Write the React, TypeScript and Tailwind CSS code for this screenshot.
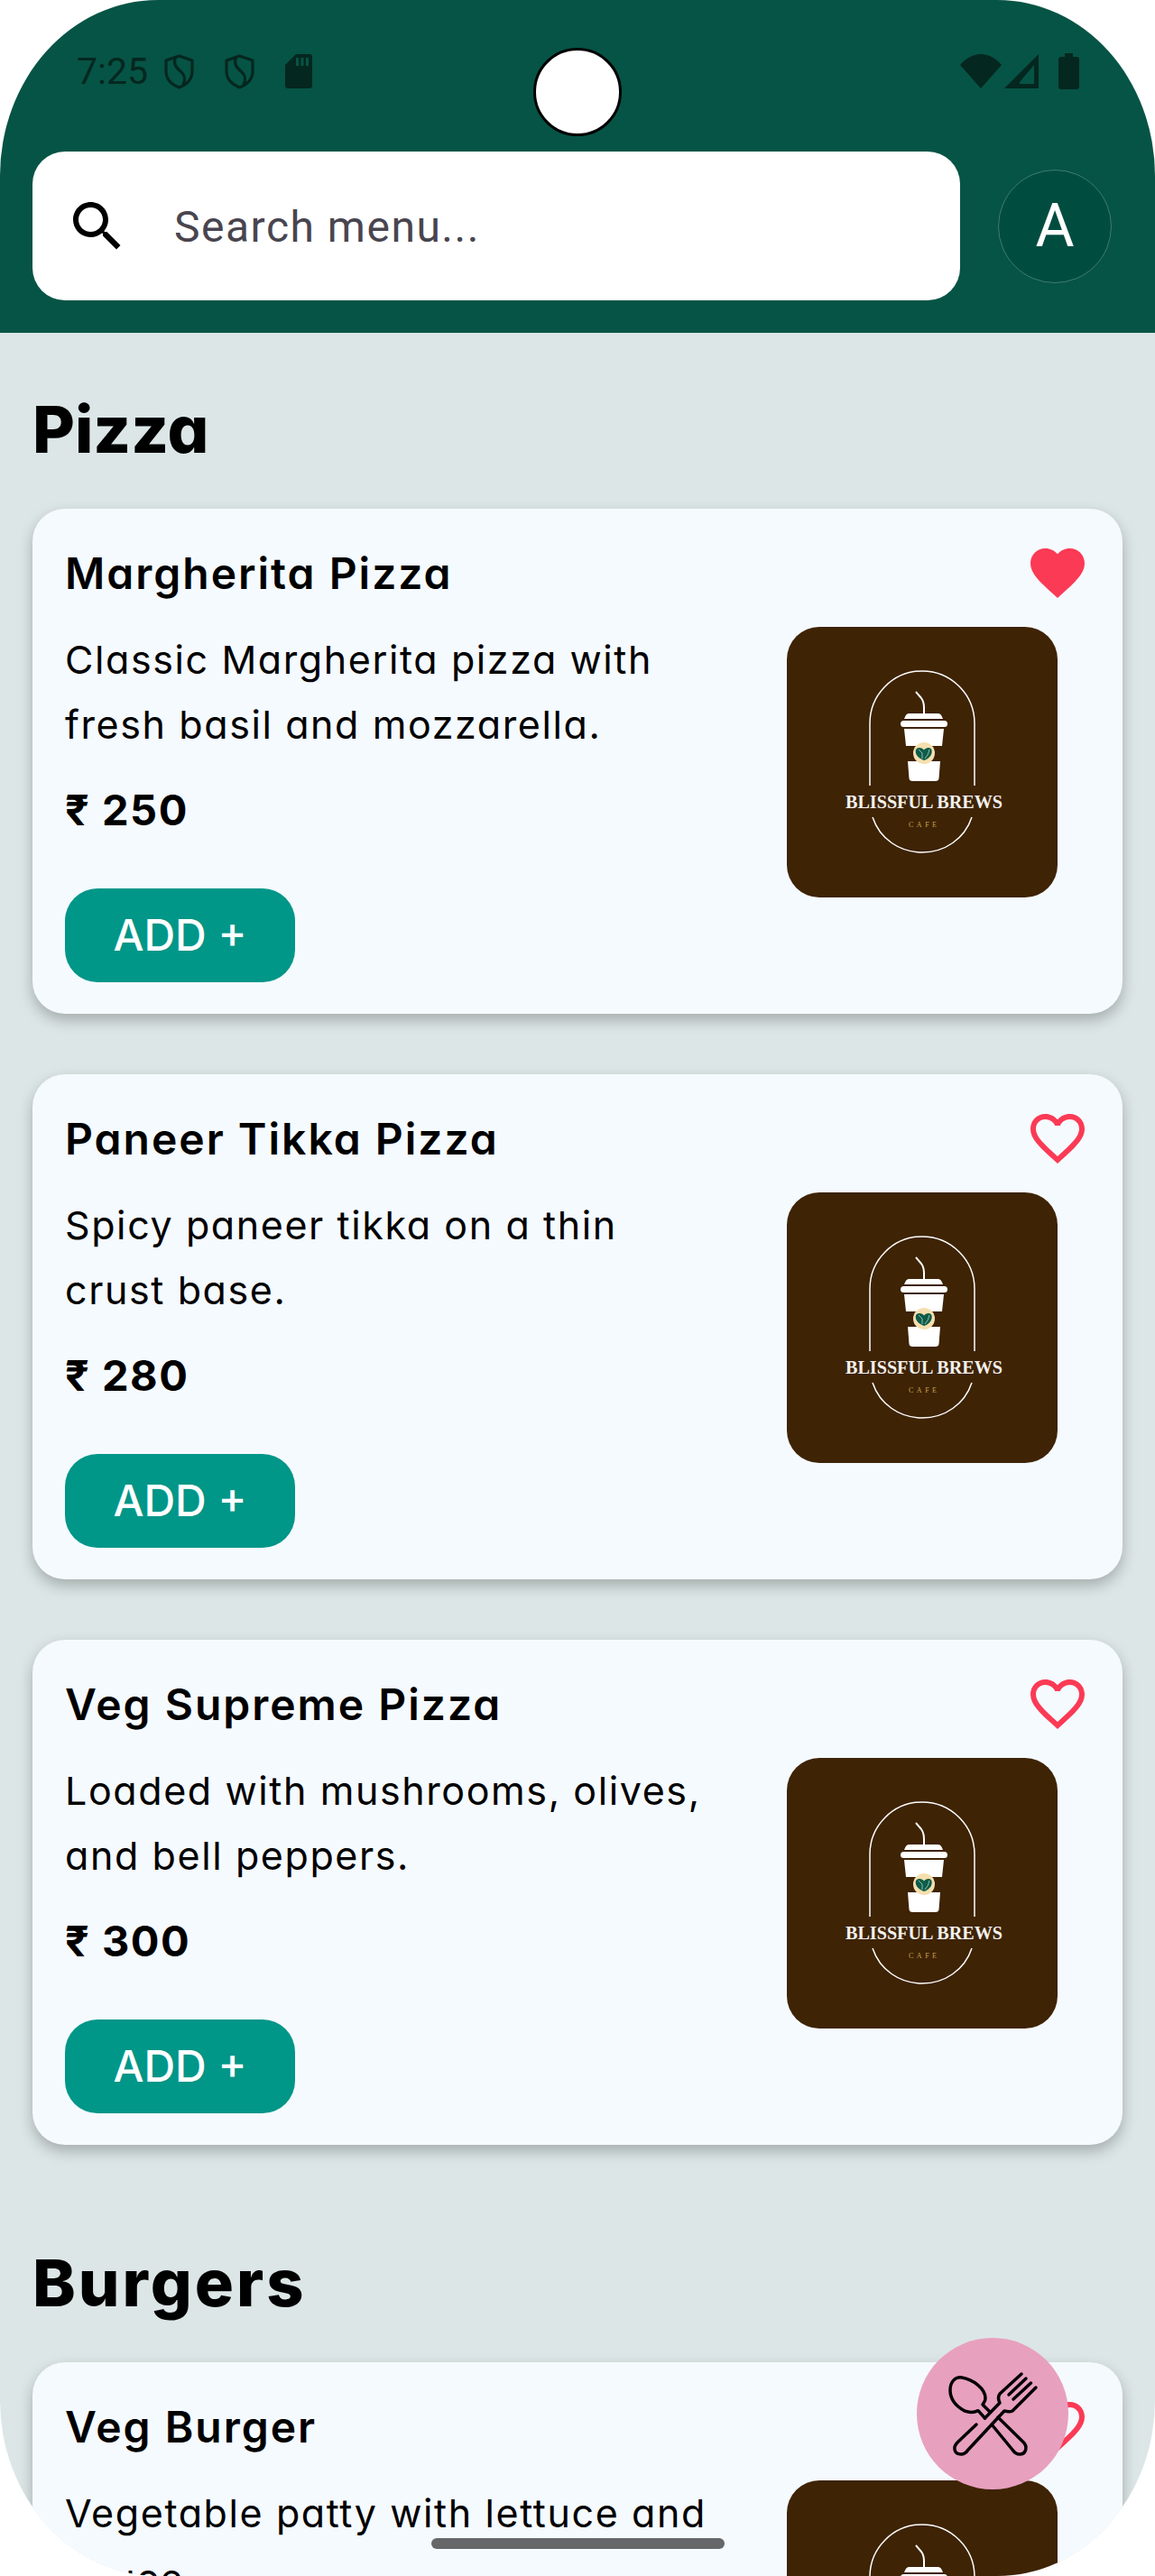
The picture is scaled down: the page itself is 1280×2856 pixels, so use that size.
const poppins = "font-['Inter','Liberation_Sans',sans-serif] [font-feature-settings:'cv11']";

function Logo() {
  return (
    <svg viewBox="0 0 300 300" className="w-full h-full block">
      <g fill="none" stroke="#fff" strokeWidth="1.5">
        <path d="M92 176V107a58 58 0 0 1 116 0V176" />
        <path d="M95 211c8 24 30 39 55 39s47-15 55-39" />
        <path d="M143 72l6 7q3 4 3 11v6" strokeWidth="2" />
      </g>
      <g fill="#fff">
        <path d="M135 96H168q3 0 5 6H130q2-6 5-6z" />
        <rect x="126" y="104" width="52" height="7" rx="3.5" />
        <path d="M130 113H174L172 132H132z" />
        <path d="M134 149H170L168.500 168q-.3 3-4 3H139.500q-3.700 0-4-3z" />
      </g>
      <circle cx="152" cy="140" r="12" fill="#f5dfae" />
      <path d="M152 148C146 146 142.700 142 142.700 138 142.700 135 145 134 147 134 149 134 151 135 152 136.500 153 135 155 134 157 134 159 134 160.700 135 160.700 138 160.700 142 158 146 152 148z" fill="#0d5c4a" />
      <path d="M146 136l4 4v6M158 136q-1 6-5 10" fill="none" stroke="#cfe3cf" strokeWidth="0.700" />
      <text x="65" y="200.700" textLength="174" lengthAdjust="spacingAndGlyphs" fontFamily="'Liberation Serif',serif" fontWeight="700" fontSize="22" fill="#f2f0ec">
        BLISSFUL BREWS
      </text>
      <text x="135" y="221.500" textLength="31" fontFamily="'Liberation Serif',serif" fontSize="8" fill="#c9a24f">
        CAFE
      </text>
    </svg>
  );
}

function Heart({ filled }: { filled?: boolean }) {
  return (
    <svg viewBox="0 0 24 24" className="absolute top-[35px] right-[36px] w-[72px] h-[72px]" fill="#fb3a55">
      {filled ? (
        <path d="M12 21.350l-1.450-1.320C5.400 15.360 2 12.280 2 8.500 2 5.420 4.420 3 7.500 3c1.740 0 3.410.810 4.500 2.090C13.090 3.810 14.760 3 16.500 3 19.580 3 22 5.420 22 8.500c0 3.780-3.400 6.860-8.550 11.540L12 21.350z" />
      ) : (
        <path d="M16.500 3c-1.740 0-3.410.810-4.500 2.090C10.910 3.810 9.240 3 7.500 3 4.420 3 2 5.420 2 8.500c0 3.780 3.400 6.860 8.550 11.540L12 21.350l1.450-1.320C18.600 15.360 22 12.280 22 8.500 22 5.420 19.580 3 16.500 3zm-4.400 15.550l-.100.100-.100-.100C7.140 14.240 4 11.390 4 8.500 4 6.500 5.500 5 7.500 5c1.540 0 3.040.990 3.570 2.360h1.870C13.460 5.990 14.960 5 16.500 5c2 0 3.500 1.500 3.500 3.500 0 2.890-3.140 5.740-7.900 10.050z" />
      )}
    </svg>
  );
}

function Card({ name, desc, price, filled }: { name: string; desc: string[]; price: string; filled?: boolean }) {
  return (
    <div className="relative flex justify-between bg-[#f5faff] rounded-[36px] pl-9 pr-[72px] pt-9 pb-[34px] h-[560px] shadow-[0_7px_16px_rgba(0,0,0,0.25)]">
      <div className="flex flex-col items-start">
        <div className={`${poppins} text-[48px] leading-[72px] font-semibold text-black whitespace-nowrap tracking-[2px]`}>{name}</div>
        <div className={`${poppins} mt-[23px] text-[43px] leading-[72px] text-black tracking-[1.6px]`}>
          {desc.map((l) => (
            <div key={l} className="whitespace-nowrap">{l}</div>
          ))}
        </div>
        <div className={`${poppins} mt-[23px] text-[47px] leading-[72px] font-bold text-black tracking-[1.5px]`}>₹ {price}</div>
        <button className="mt-[51px] w-[255px] h-[104px] rounded-[36px] bg-[#009688] text-white text-[48px] font-['Inter',sans-serif] font-medium">
          ADD +
        </button>
      </div>
      <div className="mt-[95px] w-[300px] h-[300px] rounded-[36px] overflow-hidden bg-[#3e2305] shrink-0">
        <Logo />
      </div>
      <Heart filled={filled} />
    </div>
  );
}

function Shield({ className }: { className: string }) {
  return (
    <svg viewBox="0 0 33 39" className={className} fill="none" stroke="#04271f" strokeWidth="3.200">
      <path d="M16.500 2L31 7V19C31 28 24 34 16.500 37 9 34 2 28 2 19V7z" strokeLinejoin="round" />
      <path d="M13 3C9 10 13 15 18 19c5 4 6 8 3 15" />
    </svg>
  );
}

export default function App() {
  return (
    <div className="relative w-[1280px] h-[2856px] overflow-hidden bg-white">
      <div className="relative w-full h-full overflow-hidden bg-[#dce6e6] rounded-[175px/195px]">
        <header className="relative bg-[#065445] h-[369px]">
          <div className="flex items-center h-[155px] pl-[85px] pr-[84px] pt-[3px]">
            <span className="font-['Roboto',sans-serif] text-[41px] leading-none text-[#04271f] w-[97px]">7:25</span>
            <Shield className="w-[33px] h-[39px]" />
            <Shield className="w-[33px] h-[39px] ml-[34px]" />
            <svg viewBox="0 0 30 38" className="w-[30px] h-[38px] ml-[34px]" fill="#04271f">
              <path d="M12 0H27a3 3 0 0 1 3 3V35a3 3 0 0 1-3 3H3a3 3 0 0 1-3-3V12z" />
              <path d="M12 4h3v9h-3zM17.500 4h3v9h-3zM23 4h3v9h-3z" fill="#065445" />
            </svg>
            <div className="flex-1" />
            <svg viewBox="0 0 46 38" className="w-[46px] h-[38px]" fill="#04271f">
              <path d="M23 38L0 12C6 5 14 0 23 0s17 5 23 12z" />
            </svg>
            <svg viewBox="0 0 38 38" className="w-[38px] h-[38px] ml-[3px]" fill="#04271f">
              <path fillRule="evenodd" d="M38 0V38H0zM33 12L17 31V33H33z" />
            </svg>
            <svg viewBox="0 0 23 40" className="w-[23px] h-[40px] ml-[22px]" fill="#04271f">
              <path d="M7 0H16V4H20a3 3 0 0 1 3 3V37a3 3 0 0 1-3 3H3a3 3 0 0 1-3-3V7a3 3 0 0 1 3-3H7z" />
            </svg>
          </div>
          <div className="absolute left-1/2 top-[53px] -ml-[49px] w-[98px] h-[98px] rounded-full bg-white border-[3px] border-black" />
          <div className="flex items-center pl-9 pr-[48px] mt-[13px]">
            <div className="flex items-center w-[1028px] h-[165px] bg-white rounded-[36px] pl-9">
              <svg viewBox="0 0 24 24" className="w-[72px] h-[72px]" fill="#000">
                <path d="M15.500 14h-.790l-.280-.270C15.410 12.590 16 11.110 16 9.500 16 5.910 13.090 3 9.500 3S3 5.910 3 9.500 5.910 16 9.500 16c1.610 0 3.090-.590 4.230-1.570l.270.280v.790l5 4.990L20.490 19l-4.990-5zm-6 0C7.010 14 5 11.990 5 9.500S7.010 5 9.500 5 14 7.010 14 9.500 11.990 14 9.500 14z" />
              </svg>
              <span className="ml-[49px] pt-[2px] font-['Roboto',sans-serif] text-[48px] text-[#49454f] tracking-[1.5px]">Search menu...</span>
            </div>
            <div className="ml-[42px] w-[126px] h-[126px] rounded-full bg-[#004d40] border border-[#3f7c70] flex items-center justify-center text-white font-['Roboto',sans-serif] text-[66px]">
              A
            </div>
          </div>
        </header>
        <main className="pt-[53px]">
          <section>
            <h2 className={`${poppins} px-9 text-[72px] leading-[108px] font-extrabold text-black`}>Pizza</h2>
            <div className="flex flex-col gap-[67px] mx-9 mt-[34px]">
              <Card name="Margherita Pizza" desc={["Classic Margherita pizza with", "fresh basil and mozzarella."]} price="250" filled />
              <Card name="Paneer Tikka Pizza" desc={["Spicy paneer tikka on a thin", "crust base."]} price="280" />
              <Card name="Veg Supreme Pizza" desc={["Loaded with mushrooms, olives,", "and bell peppers."]} price="300" />
            </div>
          </section>
          <section className="mt-[99px]">
            <h2 className={`${poppins} px-9 text-[72px] leading-[108px] font-extrabold text-black tracking-[3px]`}>Burgers</h2>
            <div className="flex flex-col gap-[67px] mx-9 mt-[34px]">
              <Card name="Veg Burger" desc={["Vegetable patty with lettuce and", "sauce."]} price="180" />
            </div>
          </section>
        </main>
        <button className="absolute left-[1016px] top-[2592px] w-[168px] h-[168px] rounded-full bg-[#e8a0bf]">
          <svg viewBox="0 0 168 168" className="w-full h-full" fill="none" stroke="#000" strokeWidth="3.500" strokeLinejoin="round" strokeLinecap="round">
            <path d="M75.500 89L68 80.700C61 84 56 82 53 81 44 76 37 68 37 58 37 48 43 43 50 44 62 46 76 56 76 67 76 71 74 72 73 74L81 82" />
            <path d="M90 88L118.500 116C123 121 121 129 114 129 110 129 108 127 106 124L83 96" />
            <path d="M66 96L45 116C40 121 41 129 49 129 53 129 55 127 57 124L97 81C101 82 104 82 106 81L132 55" />
            <path d="M75.500 89L92 72C90 68 90 65 92 62L116 40" />
            <path d="M107 68L126.500 50M102 63L121 45" />
          </svg>
        </button>
        <div className="absolute left-[478px] top-[2814px] w-[325px] h-3 rounded-full bg-[#666769]" />
      </div>
    </div>
  );
}
